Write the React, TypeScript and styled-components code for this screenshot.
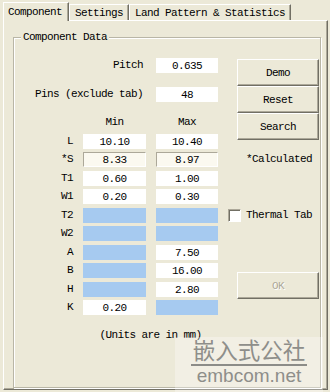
import React from 'react';
import styled, { createGlobalStyle } from 'styled-components';

const GlobalStyle = createGlobalStyle`
  html, body {
    margin: 0;
    padding: 0;
    background: #ece9d8;
  }
  body {
    font-family: "Liberation Mono", "DejaVu Sans Mono", monospace;
    font-size: 11px;
    letter-spacing: -0.6px;
    color: #000;
  }
`;

const Window = styled.div`
  position: relative;
  width: 330px;
  height: 392px;
  padding-top: 2px;
  box-sizing: border-box;
  background: #ece9d8;
  overflow: hidden;
`;

const TabStrip = styled.div`
  display: flex;
  align-items: flex-end;
  height: 18px;
  padding-left: 3px;
`;

const Tab = styled.div<{ $active?: boolean }>`
  position: relative;
  z-index: ${(p) => (p.$active ? 1 : 0)};
  display: flex;
  align-items: center;
  height: ${(p) => (p.$active ? 19 : 16)}px;
  margin-bottom: ${(p) => (p.$active ? -1 : 0)}px;
  padding: 0 ${(p) => (p.$active ? 6 : 5)}px 0 ${(p) => (p.$active ? 4 : 5)}px;
  box-sizing: border-box;
  background: #ece9d8;
  border-top: 1px solid #fff;
  border-left: 1px solid #fff;
  border-right: 1px solid #716f64;
  box-shadow: inset -1px 0 0 #aca899;
  white-space: pre;
`;

const Panel = styled.div`
  height: 370px;
  margin: 0 2px 0 3px;
  padding: 16px 0 0 9px;
  box-sizing: border-box;
  border-top: 1px solid #fff;
  border-left: 1px solid #fff;
  border-right: 1px solid #716f64;
  border-bottom: 1px solid #716f64;
  box-shadow: inset -1px -1px 0 #aca899;
`;

const GroupBox = styled.div`
  position: relative;
  display: flex;
  width: 308px;
  height: 351px;
  box-sizing: border-box;
  border: 1px solid #b9b6a6;
  box-shadow: inset 1px 1px 0 #fff, 1px 1px 0 #fff;
`;

const GroupTitle = styled.span`
  position: absolute;
  top: -7px;
  left: 7px;
  padding: 0 2px;
  line-height: 12px;
  background: #ece9d8;
`;

const FormColumn = styled.div`
  width: 214px;
  padding-top: 20px;
`;

const FieldRow = styled.div<{ $gap?: number }>`
  display: grid;
  grid-template-columns: 129px 62px;
  column-gap: 13px;
  align-items: center;
  height: 15px;
  margin-bottom: ${(p) => p.$gap ?? 0}px;
`;

const Label = styled.span`
  text-align: right;
  line-height: 15px;
  white-space: pre;
`;

const ValueBox = styled.div<{ $kind?: 'plain' | 'calc' | 'off' }>`
  height: 15px;
  box-sizing: border-box;
  line-height: 14px;
  text-align: center;
  background: ${(p) =>
    p.$kind === 'off' ? '#a6caf0' : p.$kind === 'calc' ? '#fbf9f0' : '#fff'};
  border: 1px solid
    ${(p) => (p.$kind === 'calc' ? '#aca899' : p.$kind === 'off' ? '#a6caf0' : '#fff')};
  border-bottom-color: ${(p) => (p.$kind === 'calc' ? '#fff' : 'transparent')};
  border-right-color: ${(p) => (p.$kind === 'calc' ? '#fff' : 'transparent')};
`;

const DimGrid = styled.div`
  display: grid;
  grid-template-columns: 59px 63px 62px;
  grid-template-rows: 14px;
  grid-auto-rows: 15px;
  column-gap: 10px;
  row-gap: 3.5px;
  margin-top: 14px;
`;

const HeadCell = styled.span`
  text-align: center;
  line-height: 12px;
`;

const Units = styled.div`
  grid-column: 2 / 4;
  margin-top: 10px;
  text-align: center;
  line-height: 12px;
  white-space: pre;
`;

const SideColumn = styled.div`
  display: flex;
  flex-direction: column;
  align-items: flex-start;
  padding-top: 21px;
`;

const Button = styled.button<{ $gap?: number }>`
  width: 82px;
  height: 27px;
  margin: 0 0 ${(p) => p.$gap ?? 0}px 9px;
  padding: 0;
  font: inherit;
  letter-spacing: inherit;
  color: #000;
  background: #ece9d8;
  border: 1px solid;
  border-color: #fff #716f64 #716f64 #fff;
  box-shadow: inset -1px -1px 0 #aca899;
  &:disabled {
    color: #aca899;
    text-shadow: 1px 1px 0 #fff;
  }
`;

const Note = styled.div<{ $gap?: number }>`
  margin: 0 0 ${(p) => p.$gap ?? 0}px 18px;
  line-height: 12px;
`;

const CheckRow = styled.label<{ $gap?: number }>`
  display: flex;
  align-items: center;
  gap: 5px;
  height: 14px;
  margin-bottom: ${(p) => p.$gap ?? 0}px;
  white-space: pre;
`;

const CheckBox = styled.span`
  width: 13px;
  height: 13px;
  box-sizing: border-box;
  background: #fff;
  border: 1px solid;
  border-color: #aca899 #fff #fff #aca899;
  box-shadow: inset 1px 1px 0 #716f64;
`;

const Watermark = styled.div`
  position: absolute;
  left: 175px;
  top: 337px;
  width: 148px;
  height: 55px;
  display: flex;
  flex-direction: column;
  align-items: center;
  background: rgba(255, 255, 255, 0.3);
  letter-spacing: 0;
`;

const MarkTitle = styled.div`
  width: 116px;
  padding-bottom: 2px;
  border-bottom: 2px solid #8c8c88;
  font-family: "Noto Sans CJK SC", sans-serif;
  font-size: 22.5px;
  line-height: 25px;
  color: #8e8e8a;
  text-align: center;
  white-space: nowrap;
`;

const MarkUrl = styled.div`
  font-family: "Liberation Sans", Arial, sans-serif;
  font-size: 19px;
  line-height: 20px;
  color: #8e8e8a;
`;

type Kind = 'plain' | 'calc' | 'off';
const dims: { name: string; min: [Kind, string]; max: [Kind, string] }[] = [
  { name: 'L', min: ['plain', '10.10'], max: ['plain', '10.40'] },
  { name: '*S', min: ['calc', '8.33'], max: ['calc', '8.97'] },
  { name: 'T1', min: ['plain', '0.60'], max: ['plain', '1.00'] },
  { name: 'W1', min: ['plain', '0.20'], max: ['plain', '0.30'] },
  { name: 'T2', min: ['off', ''], max: ['off', ''] },
  { name: 'W2', min: ['off', ''], max: ['off', ''] },
  { name: 'A', min: ['off', ''], max: ['plain', '7.50'] },
  { name: 'B', min: ['off', ''], max: ['plain', '16.00'] },
  { name: 'H', min: ['off', ''], max: ['plain', '2.80'] },
  { name: 'K', min: ['plain', '0.20'], max: ['off', ''] },
];

export default function App() {
  return (
    <Window>
      <GlobalStyle />
      <TabStrip>
        <Tab $active>Component</Tab>
        <Tab>Settings</Tab>
        <Tab>Land Pattern &amp; Statistics</Tab>
      </TabStrip>
      <Panel>
        <GroupBox>
          <GroupTitle>Component Data</GroupTitle>
          <FormColumn>
            <FieldRow $gap={14}>
              <Label>Pitch</Label>
              <ValueBox>0.635</ValueBox>
            </FieldRow>
            <FieldRow>
              <Label>Pins (exclude tab)</Label>
              <ValueBox>48</ValueBox>
            </FieldRow>
            <DimGrid>
              <span />
              <HeadCell>Min</HeadCell>
              <HeadCell>Max</HeadCell>
              {dims.map((d) => (
                <React.Fragment key={d.name}>
                  <Label>{d.name}</Label>
                  <ValueBox $kind={d.min[0]}>{d.min[1]}</ValueBox>
                  <ValueBox $kind={d.max[0]}>{d.max[1]}</ValueBox>
                </React.Fragment>
              ))}
              <Units>(Units are in mm)</Units>
            </DimGrid>
          </FormColumn>
          <SideColumn>
            <Button>Demo</Button>
            <Button>Reset</Button>
            <Button $gap={13}>Search</Button>
            <Note $gap={43}>*Calculated</Note>
            <CheckRow $gap={50}>
              <CheckBox />
              Thermal Tab
            </CheckRow>
            <Button disabled>OK</Button>
          </SideColumn>
        </GroupBox>
      </Panel>
      <Watermark>
        <MarkTitle>嵌入式公社</MarkTitle>
        <MarkUrl>embcom.net</MarkUrl>
      </Watermark>
    </Window>
  );
}
